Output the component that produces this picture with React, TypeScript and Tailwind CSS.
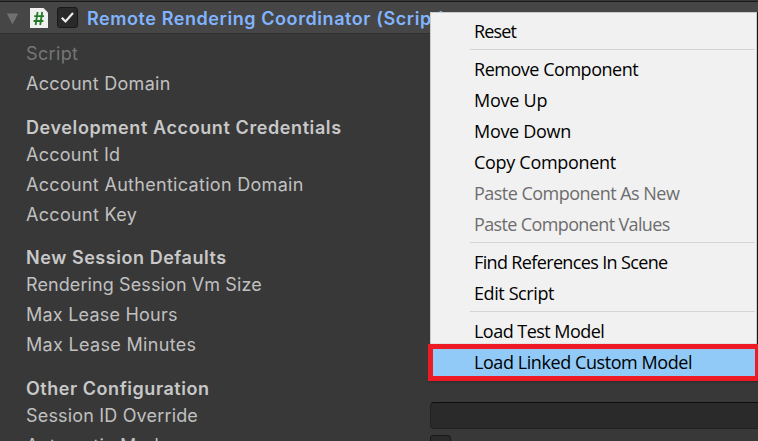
import React from "react";

type Row = { text: string; kind?: "heading" | "disabled"; h: string; ls: string };

const rows: Row[] = [
  { text: "Script", kind: "disabled", h: "h-[30px] pt-[5px]", ls: "tracking-[0.35px]" },
  { text: "Account Domain", h: "h-[30px] pt-[5px]", ls: "tracking-[0.28px]" },
  { text: "Development Account Credentials", kind: "heading", h: "h-[41px] pt-[19px]", ls: "tracking-[0.6px]" },
  { text: "Account Id", h: "h-[30px] pt-[5px]", ls: "tracking-[0.25px]" },
  { text: "Account Authentication Domain", h: "h-[30px] pt-[5px]", ls: "tracking-[0.3px]" },
  { text: "Account Key", h: "h-[30px] pt-[5px]", ls: "tracking-[0.32px]" },
  { text: "New Session Defaults", kind: "heading", h: "h-[40px] pt-[18px]", ls: "tracking-[0.55px]" },
  { text: "Rendering Session Vm Size", h: "h-[30px] pt-[5px]", ls: "tracking-[0.1px]" },
  { text: "Max Lease Hours", h: "h-[30px] pt-[5px]", ls: "tracking-[0.22px]" },
  { text: "Max Lease Minutes", h: "h-[30px] pt-[5px]", ls: "tracking-[0.32px]" },
  { text: "Other Configuration", kind: "heading", h: "h-[41px] pt-[19px]", ls: "tracking-[0.54px]" },
  { text: "Session ID Override", h: "h-[30px] pt-[5px]", ls: "tracking-[0.17px]" },
  { text: "Automatic Mode", h: "h-[30px] pt-[5px]", ls: "tracking-[0.3px]" },
];

type Item = { text: string; disabled?: boolean; ls: string };

const groups: Item[][] = [
  [{ text: "Reset", ls: "tracking-[-0.85px]" }],
  [
    { text: "Remove Component", ls: "tracking-[-0.47px]" },
    { text: "Move Up", ls: "tracking-[-0.25px]" },
    { text: "Move Down", ls: "tracking-[-0.3px]" },
    { text: "Copy Component", ls: "tracking-[-0.3px]" },
    { text: "Paste Component As New", disabled: true, ls: "tracking-[-0.52px]" },
    { text: "Paste Component Values", disabled: true, ls: "tracking-[-0.63px]" },
  ],
  [
    { text: "Find References In Scene", ls: "tracking-[-0.64px]" },
    { text: "Edit Script", ls: "tracking-[-0.4px]" },
  ],
  [{ text: "Load Test Model", ls: "tracking-[-0.53px]" }],
];

function rowTone(kind?: Row["kind"]) {
  if (kind === "heading") return "font-semibold text-[#c8c8c8]";
  if (kind === "disabled") return "text-[#767676]";
  return "text-[#c0c0c0]";
}

function Header() {
  return (
    <header className="flex h-[33px] items-center border-t border-b border-t-[#1a1a1a] border-b-[#303030] bg-[#464646] pl-[6px]">
      <svg width="13" height="12" viewBox="0 0 13 12" className="mt-[3px]">
        <path d="M0.8 0.5H12.2L6.5 11.5Z" fill="#707070" />
      </svg>
      <svg width="18" height="20" viewBox="0 0 18 20" className="ml-[11px] mt-[1px]">
        <path d="M0 0H13.5L18 4.5V20H0Z" fill="#f0f0f0" />
        <path d="M7.6 4L5.6 17M12.2 4L10.2 17M4.2 8.2H14M3.6 13H13.4" stroke="#247a28" strokeWidth="1.8" fill="none" />
      </svg>
      <span className="ml-[9px] flex h-[21px] w-[21px] items-center justify-center rounded-[3px] border border-[#191919] bg-[#2a2a2a]">
        <svg width="15" height="13" viewBox="0 0 15 13">
          <path d="M1.8 6.8L5.5 10.5L13 2" stroke="#ededed" strokeWidth="2.2" fill="none" />
        </svg>
      </span>
      <h1 className="ml-[9px] mt-[2px] text-[18px] leading-[21px] font-semibold tracking-[0.57px] whitespace-nowrap text-[#81b4ff]">
        Remote Rendering Coordinator (Script)
      </h1>
    </header>
  );
}

function ContextMenu() {
  return (
    <nav className="absolute left-[428px] top-[12px] w-[332px] font-['Open_Sans',sans-serif] text-[18px] leading-6 text-black">
      <div className="ml-[2px] w-[328px] border-r border-[#151515]">
        <div className="h-[332px] border border-b-0 border-[#cccccc] bg-[#f1f1f1] pt-[3px]">
          {groups.map((items, g) => (
            <div key={g}>
              {g > 0 && (
                <div className="h-[7px] pt-[2px] pr-px pl-[39px]">
                  <div className="h-px bg-[#d5d5d5]" />
                </div>
              )}
              {items.map((item) => (
                <div key={item.text} className={`flex h-[31px] items-start pt-[3px] pl-[43px] ${item.disabled ? "text-[#6d6d6d]" : ""}`}>
                  <span className={`whitespace-nowrap ${item.ls}`}>{item.text}</span>
                </div>
              ))}
            </div>
          ))}
        </div>
      </div>
      <div className="flex h-[37px] items-start border-[5px] border-[#ed1c24] bg-[#91c9f7] pt-px pl-[41px] shadow-[2px_1px_2px_#2a2a2a]">
        <span className="whitespace-nowrap tracking-[-0.43px]">Load Linked Custom Model</span>
      </div>
    </nav>
  );
}

export default function App() {
  return (
    <div className="relative h-[441px] w-[758px] overflow-hidden bg-[#383838] pt-px font-['Inter',sans-serif]">
      <Header />
      <main className="flex pt-[4px]">
        <div className="w-[430px] shrink-0 pl-[26px] text-[18px] leading-[21px]">
          {rows.map((row) => (
            <div key={row.text} className={`whitespace-nowrap ${row.h} ${row.ls} ${rowTone(row.kind)}`}>
              {row.text}
            </div>
          ))}
        </div>
        <div className="grow pt-[364px]">
          <div className="h-[27px] rounded-l-[4px] border border-r-0 border-[#212121] border-t-[#0d0d0d] bg-[#2a2a2a]" />
          <div className="mt-[6px] h-[21px] w-[21px] rounded-[3px] border border-[#191919] bg-[#2a2a2a]">
            <svg width="19" height="19" viewBox="0 0 19 19">
              <path d="M3.5 10L7.5 14L15 5.5" stroke="#ededed" strokeWidth="2" fill="none" />
            </svg>
          </div>
        </div>
      </main>
      <ContextMenu />
    </div>
  );
}
